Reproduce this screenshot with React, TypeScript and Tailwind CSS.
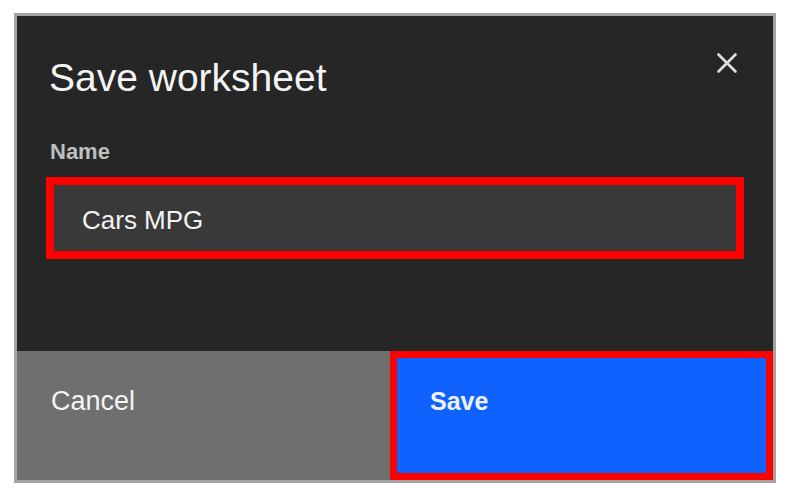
export default function App() {
  const font = { fontFamily: '"Liberation Sans", Arial, sans-serif' };

  return (
    <div className="h-[494px] w-[794px] bg-white pl-[14px] pt-[13px]" style={font}>
      <div className="flex h-[470px] w-[762px] flex-col border-[3px] border-[#a3a3a3] bg-[#262626]">
        {/* Body */}
        <div className="relative h-[335px] pt-[39px]">
          <h2 className="pl-[32px] text-[39px] leading-[46px] text-[#f4f4f4]">Save worksheet</h2>

          <button
            type="button"
            aria-label="Close"
            className="absolute left-[699px] top-[36px] flex h-[22px] w-[22px] items-center justify-center"
          >
            <svg width="22" height="22" viewBox="0 0 22 22" fill="none">
              <path d="M2.5 2.5L19.5 19.5M19.5 2.5L2.5 19.5" stroke="#e0e0e0" strokeWidth="2.6" strokeLinecap="round" />
            </svg>
          </button>

          <p className="mt-[38px] pl-[33px] text-[22px] font-semibold leading-[26px] text-[#bfbfbf]">
            Name
          </p>

          <div className="mx-[29px] mt-[12px] border-[8px] border-[#ff0000]">
            <div className="flex h-[66px] items-center bg-[#393939] pl-[28px] pt-[5px]">
              <span className="text-[26px] leading-[29px] text-[#f4f4f4]">Cars MPG</span>
            </div>
          </div>
        </div>

        {/* Footer */}
        <div className="flex flex-1">
          <button
            type="button"
            className="flex w-[373px] items-start self-stretch bg-[#6f6f6f] pl-[34px] pt-[34px] text-left text-[27px] leading-[32px] text-[#f4f4f4]"
          >
            Cancel
          </button>
          <button
            type="button"
            className="flex flex-1 items-start border-[7px] border-[#ff0000] bg-[#0f62fe] pl-[33px] pt-[27px] text-left text-[25px] font-semibold leading-[32px] text-[#eef2ff]"
          >
            Save
          </button>
        </div>
      </div>
    </div>
  );
}
